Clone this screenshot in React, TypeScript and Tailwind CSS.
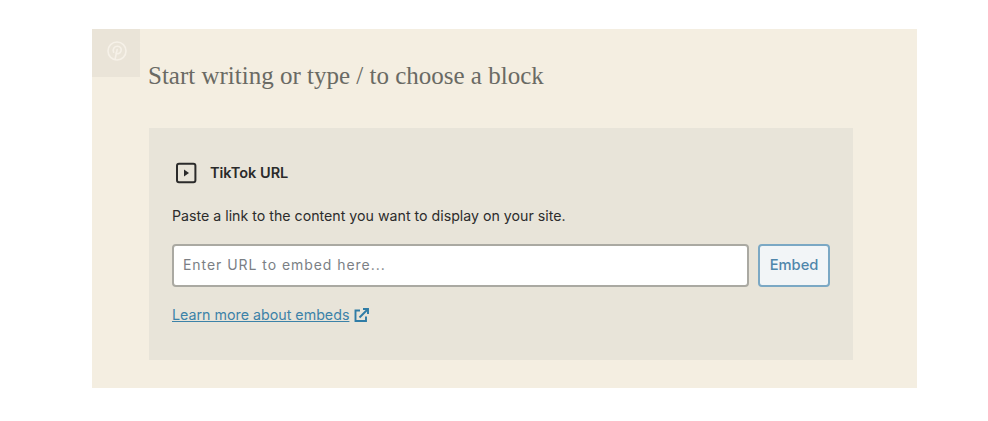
import React from "react";

const sans = "font-['Inter','Liberation_Sans',sans-serif]";

export default function App() {
  return (
    <div className="w-[988px] h-[421px] bg-white overflow-hidden pt-[29px] pl-[92px]">
      <div className="relative w-[825px] h-[359px] bg-[#f4eee1] pl-[57px] pr-[64px]">
        <div className="absolute left-0 top-0 w-[48px] h-[48px] bg-[#eae4d8] flex items-center justify-center pb-[5px] pl-[1px]">
          <svg width="22" height="22" viewBox="0 0 22 22" fill="none" stroke="#f6f1e8" strokeWidth="1.6" strokeLinecap="round">
            <circle cx="11" cy="11" r="9" />
            <path d="M9 19.5 L11.2 9.5" />
            <path d="M7.6 12.2 C6.2 8.8 8.6 6.2 11.4 6.3 C14.4 6.4 15.8 8.6 15 11 C14.2 13.6 11.4 14.6 10 13" />
          </svg>
        </div>
        <h1 className="ml-[-1px] pt-[29px] h-[99px] text-[25px] leading-[36px] text-[#6a6a64] font-['Liberation_Serif',serif]">
          Start writing or type / to choose a block
        </h1>
        <div className={`h-[232px] bg-[#e8e4d9] px-[23px] pt-[33px] ${sans}`}>
          <div className="flex items-center h-[24px] gap-[12px] ml-[2px]">
            <svg width="24" height="24" viewBox="0 0 24 24" fill="none">
              <rect x="3" y="2.8" width="18.4" height="18.4" rx="2" stroke="#2b2b2b" strokeWidth="2" />
              <path d="M10 8.5 L15 12 L10 15.5 Z" fill="#2b2b2b" />
            </svg>
            <span className="text-[14.5px] font-semibold text-[#2a2a2a] leading-[24px]">TikTok URL</span>
          </div>
          <p className="mt-[22px] text-[14.2px] leading-[18px] text-[#2c2c2c]">
            Paste a link to the content you want to display on your site.
          </p>
          <div className="flex mt-[19px] gap-[9px]">
            <div className="w-[578px] h-[43px] bg-white border-2 border-[#aaa9a2] rounded-[4px] flex items-center pl-[9px] pb-[2px] text-[14px] text-[#7b7f85] tracking-[0.95px]">
              Enter URL to embed here...
            </div>
            <button className="w-[72px] h-[43px] bg-[#f2f5f7] border-2 border-[#7ba8c4] rounded-[4px] text-[14.7px] font-medium text-[#4f86ab]">
              Embed
            </button>
          </div>
          <div className="flex items-center mt-[18px] gap-[4px] h-[20px]">
            <a className="text-[14.25px] leading-[20px] text-[#3c82a8] underline">Learn more about embeds</a>
            <svg width="17" height="17" viewBox="0 0 17 17" fill="none" stroke="#2f7ca6" strokeWidth="1.9">
              <path d="M7 3.5 H2.5 V14 H13 V9.5" />
              <path d="M6.5 10.5 L14.5 2.5" />
              <path d="M10 2 H15 V7" />
            </svg>
          </div>
        </div>
      </div>
    </div>
  );
}
